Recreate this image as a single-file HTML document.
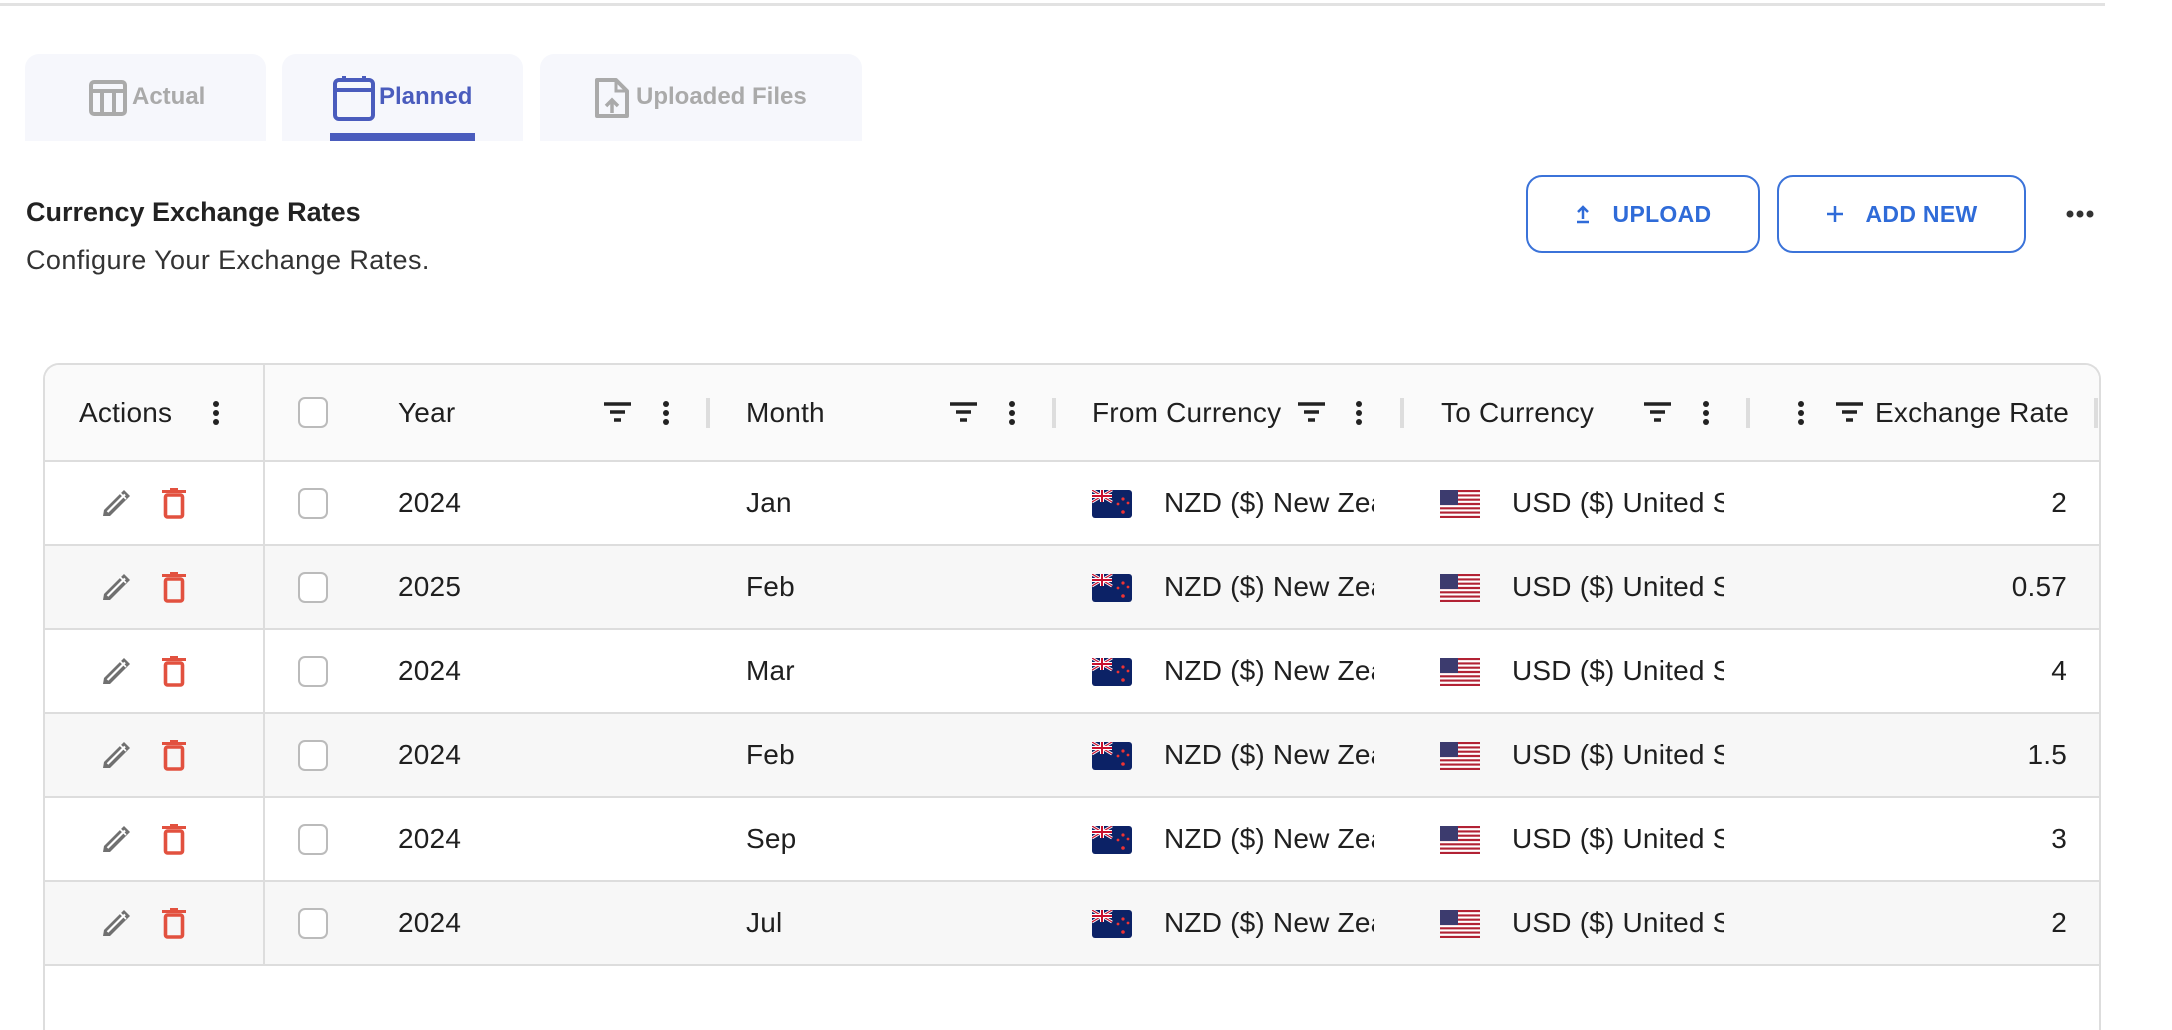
<!DOCTYPE html>
<html><head><meta charset="utf-8"><style>
*{box-sizing:border-box;margin:0;padding:0}
html,body{width:2172px;height:1030px;overflow:hidden}
body{background:#fff;font-family:"Liberation Sans",sans-serif;color:#1f1f1f;position:relative}
.a{position:absolute}
.tab{position:absolute;top:54px;height:87px;background:#f6f7fc;border-radius:14px 14px 0 0}
.tt{position:absolute;font-weight:bold;font-size:24px;top:83px;color:#aaa}
.btn{position:absolute;top:175px;height:78px;border:2px solid #3b73d9;border-radius:16px;color:#2f6bd8;font-weight:bold;font-size:23px;display:flex;align-items:center;justify-content:center;gap:22px;letter-spacing:.3px}
.tbl{position:absolute;left:43px;top:363px;width:2058px;height:667px;border:2px solid #ddd;border-bottom:0;border-radius:16px 16px 0 0;overflow:hidden}
.hd{position:absolute;left:0;top:0;width:100%;height:97px;background:#fafafa;border-bottom:2px solid #ddd}
.row{position:absolute;left:0;width:100%;height:84px;border-bottom:2px solid #ddd}
.t{position:absolute;font-size:28px;line-height:30px;white-space:nowrap;letter-spacing:.2px}
.hd .t{top:33px}
.row .t{top:26px}
.cb{position:absolute;left:253px;width:30px;height:31px;border:2px solid #bbb;border-radius:7px;background:#fff}
.sep{position:absolute;top:33px;width:4px;height:30px;background:#ddd}
.clip{overflow:hidden}
</style></head><body>
<div class="a" style="left:0;top:3px;width:2105px;height:3px;background:#e2e2e2"></div>

<div class="tab" style="left:25px;width:241px"></div>
<div class="tab" style="left:282px;width:241px"></div>
<div class="tab" style="left:540px;width:322px"></div>
<svg class="a" style="left:89px;top:80px" width="38" height="36" viewBox="0 0 38 36"><rect x="2" y="2" width="34" height="32" rx="3" fill="none" stroke="#aaa" stroke-width="4"/><path d="M2 11H36M13 11V34M25 11V34" stroke="#aaa" stroke-width="4"/></svg>
<div class="tt" style="left:132px">Actual</div>
<svg class="a" style="left:333px;top:75px" width="42" height="46" viewBox="0 0 42 46"><rect x="2" y="5" width="38" height="39" rx="4" fill="none" stroke="#4a5cbd" stroke-width="4"/><path d="M2 15H40M11 1V7M31 1V7" stroke="#4a5cbd" stroke-width="4"/></svg>
<div class="tt" style="left:379px;color:#4a5cbd">Planned</div>
<div class="a" style="left:330px;top:133px;width:145px;height:8px;background:#4a5cbd"></div>
<svg class="a" style="left:594px;top:77px" width="36" height="42" viewBox="0 0 36 42"><path d="M3 3H22L33 14V39H3Z" fill="none" stroke="#aaa" stroke-width="4" stroke-linejoin="round"/><path d="M22 3V14H33" fill="none" stroke="#aaa" stroke-width="3"/><path d="M18 36V24M12 29L18 23L24 29" fill="none" stroke="#aaa" stroke-width="3.5"/></svg>
<div class="tt" style="left:636px">Uploaded Files</div>

<div class="a" style="left:26px;top:197px;font-size:27px;font-weight:bold;color:#222">Currency Exchange Rates</div>
<div class="a" style="left:26px;top:245px;font-size:27px;color:#333;letter-spacing:.4px">Configure Your Exchange Rates.</div>

<div class="btn" style="left:1526px;width:234px"><svg width="16" height="20" viewBox="0 0 16 20"><path d="M8 15V3M3 8L8 3L13 8" fill="none" stroke="#2f6bd8" stroke-width="2.5"/><path d="M2 18H14" stroke="#2f6bd8" stroke-width="2.5"/></svg><span>UPLOAD</span></div>
<div class="btn" style="left:1777px;width:249px"><svg width="18" height="18" viewBox="0 0 18 18"><path d="M9 1V17M1 9H17" stroke="#2f6bd8" stroke-width="2.5"/></svg><span>ADD NEW</span></div>
<svg class="a" style="left:2066px;top:209px" width="28" height="10"><circle cx="4" cy="5" r="3.5" fill="#333"/><circle cx="14" cy="5" r="3.5" fill="#333"/><circle cx="24" cy="5" r="3.5" fill="#333"/></svg>

<svg width="0" height="0" style="position:absolute">
<defs>
<g id="flt"><path d="M1 2H28M7 10H22M11 18H18" stroke="#222" stroke-width="3.5"/></g>
<g id="keb"><circle cx="4" cy="3" r="3" fill="#222"/><circle cx="4" cy="12" r="3" fill="#222"/><circle cx="4" cy="21" r="3" fill="#222"/></g>
<g id="pen"><path d="M3 28L4 22L24 2L30 8L10 28Z" fill="#707070"/><path d="M7.5 24L25 6.5" stroke="#fff" stroke-width="2.2"/><path d="M20 5L26 11" stroke="#fff" stroke-width="1.6"/></g>
<g id="trs"><path d="M0 3.5H24M8 1.5H16" stroke="#e2513f" stroke-width="3"/><rect x="3.5" y="7" width="17" height="22" rx="2" fill="none" stroke="#e2513f" stroke-width="3.6"/></g>
<g id="nz"><rect width="40" height="28" rx="3" fill="#0c2266"/><path d="M0 0L20 12M20 0L0 12" stroke="#fff" stroke-width="3"/><path d="M0 0L20 12M20 0L0 12" stroke="#c8102e" stroke-width="1.2"/><path d="M10 0V12M0 6H20" stroke="#fff" stroke-width="4"/><path d="M10 0V12M0 6H20" stroke="#c8102e" stroke-width="2"/><circle cx="31" cy="9" r="1.6" fill="#e33"/><circle cx="26" cy="14" r="1.4" fill="#e33"/><circle cx="36" cy="13" r="1.4" fill="#e33"/><circle cx="31" cy="22" r="1.8" fill="#e33"/></g>
<g id="us"><rect width="40" height="28" rx="3" fill="#fff"/><path d="M0 1.1H40M0 5.4H40M0 9.7H40M0 14H40M0 18.3H40M0 22.6H40M0 26.9H40" stroke="#b22234" stroke-width="2.15"/><rect width="18" height="15" fill="#3c3b6e"/></g>
</defs></svg>

<div class="tbl">
 <div class="hd">
  <div class="t" style="left:34px">Actions</div>
  <svg class="a" style="left:167px;top:36px" width="8" height="25"><use href="#keb"/></svg>
  <div class="a" style="left:218px;top:0;width:2px;height:97px;background:#ddd"></div>
  <div class="cb" style="top:32px"></div>
  <div class="t" style="left:353px">Year</div>
  <svg class="a" style="left:558px;top:37px" width="30" height="22"><use href="#flt"/></svg>
  <svg class="a" style="left:617px;top:36px" width="8" height="25"><use href="#keb"/></svg>
  <div class="sep" style="left:661px"></div>
  <div class="t" style="left:701px">Month</div>
  <svg class="a" style="left:904px;top:37px" width="30" height="22"><use href="#flt"/></svg>
  <svg class="a" style="left:963px;top:36px" width="8" height="25"><use href="#keb"/></svg>
  <div class="sep" style="left:1007px"></div>
  <div class="t" style="left:1047px">From Currency</div>
  <svg class="a" style="left:1252px;top:37px" width="30" height="22"><use href="#flt"/></svg>
  <svg class="a" style="left:1310px;top:36px" width="8" height="25"><use href="#keb"/></svg>
  <div class="sep" style="left:1355px"></div>
  <div class="t" style="left:1396px">To Currency</div>
  <svg class="a" style="left:1598px;top:37px" width="30" height="22"><use href="#flt"/></svg>
  <svg class="a" style="left:1657px;top:36px" width="8" height="25"><use href="#keb"/></svg>
  <div class="sep" style="left:1701px"></div>
  <svg class="a" style="left:1752px;top:36px" width="8" height="25"><use href="#keb"/></svg>
  <svg class="a" style="left:1790px;top:37px" width="30" height="22"><use href="#flt"/></svg>
  <div class="t" style="left:1830px">Exchange Rate</div>
  <div class="sep" style="left:2049px"></div>
 </div>
 <div class="a" style="left:218px;top:97px;width:2px;height:504px;background:#ddd;z-index:2"></div>

 <div class="row" style="top:97px;background:#fff">
  <svg class="a" style="left:55px;top:26px" width="32" height="31"><use href="#pen"/></svg><svg class="a" style="left:117px;top:26px" width="24" height="31"><use href="#trs"/></svg>
  <div class="cb" style="top:26px"></div><div class="t" style="left:353px">2024</div><div class="t" style="left:701px">Jan</div>
  <svg class="a" style="left:1047px;top:28px" width="40" height="28"><use href="#nz"/></svg><div class="t clip" style="left:1119px;width:210px">NZD ($) New Zealand Dollar</div>
  <svg class="a" style="left:1395px;top:28px" width="40" height="28"><use href="#us"/></svg><div class="t clip" style="left:1467px;width:212px">USD ($) United States Dollar</div>
  <div class="t" style="right:32px">2</div>
 </div>
 <div class="row" style="top:181px;background:#f7f7f7">
  <svg class="a" style="left:55px;top:26px" width="32" height="31"><use href="#pen"/></svg><svg class="a" style="left:117px;top:26px" width="24" height="31"><use href="#trs"/></svg>
  <div class="cb" style="top:26px"></div><div class="t" style="left:353px">2025</div><div class="t" style="left:701px">Feb</div>
  <svg class="a" style="left:1047px;top:28px" width="40" height="28"><use href="#nz"/></svg><div class="t clip" style="left:1119px;width:210px">NZD ($) New Zealand Dollar</div>
  <svg class="a" style="left:1395px;top:28px" width="40" height="28"><use href="#us"/></svg><div class="t clip" style="left:1467px;width:212px">USD ($) United States Dollar</div>
  <div class="t" style="right:32px">0.57</div>
 </div>
 <div class="row" style="top:265px;background:#fff">
  <svg class="a" style="left:55px;top:26px" width="32" height="31"><use href="#pen"/></svg><svg class="a" style="left:117px;top:26px" width="24" height="31"><use href="#trs"/></svg>
  <div class="cb" style="top:26px"></div><div class="t" style="left:353px">2024</div><div class="t" style="left:701px">Mar</div>
  <svg class="a" style="left:1047px;top:28px" width="40" height="28"><use href="#nz"/></svg><div class="t clip" style="left:1119px;width:210px">NZD ($) New Zealand Dollar</div>
  <svg class="a" style="left:1395px;top:28px" width="40" height="28"><use href="#us"/></svg><div class="t clip" style="left:1467px;width:212px">USD ($) United States Dollar</div>
  <div class="t" style="right:32px">4</div>
 </div>
 <div class="row" style="top:349px;background:#f7f7f7">
  <svg class="a" style="left:55px;top:26px" width="32" height="31"><use href="#pen"/></svg><svg class="a" style="left:117px;top:26px" width="24" height="31"><use href="#trs"/></svg>
  <div class="cb" style="top:26px"></div><div class="t" style="left:353px">2024</div><div class="t" style="left:701px">Feb</div>
  <svg class="a" style="left:1047px;top:28px" width="40" height="28"><use href="#nz"/></svg><div class="t clip" style="left:1119px;width:210px">NZD ($) New Zealand Dollar</div>
  <svg class="a" style="left:1395px;top:28px" width="40" height="28"><use href="#us"/></svg><div class="t clip" style="left:1467px;width:212px">USD ($) United States Dollar</div>
  <div class="t" style="right:32px">1.5</div>
 </div>
 <div class="row" style="top:433px;background:#fff">
  <svg class="a" style="left:55px;top:26px" width="32" height="31"><use href="#pen"/></svg><svg class="a" style="left:117px;top:26px" width="24" height="31"><use href="#trs"/></svg>
  <div class="cb" style="top:26px"></div><div class="t" style="left:353px">2024</div><div class="t" style="left:701px">Sep</div>
  <svg class="a" style="left:1047px;top:28px" width="40" height="28"><use href="#nz"/></svg><div class="t clip" style="left:1119px;width:210px">NZD ($) New Zealand Dollar</div>
  <svg class="a" style="left:1395px;top:28px" width="40" height="28"><use href="#us"/></svg><div class="t clip" style="left:1467px;width:212px">USD ($) United States Dollar</div>
  <div class="t" style="right:32px">3</div>
 </div>
 <div class="row" style="top:517px;background:#f7f7f7">
  <svg class="a" style="left:55px;top:26px" width="32" height="31"><use href="#pen"/></svg><svg class="a" style="left:117px;top:26px" width="24" height="31"><use href="#trs"/></svg>
  <div class="cb" style="top:26px"></div><div class="t" style="left:353px">2024</div><div class="t" style="left:701px">Jul</div>
  <svg class="a" style="left:1047px;top:28px" width="40" height="28"><use href="#nz"/></svg><div class="t clip" style="left:1119px;width:210px">NZD ($) New Zealand Dollar</div>
  <svg class="a" style="left:1395px;top:28px" width="40" height="28"><use href="#us"/></svg><div class="t clip" style="left:1467px;width:212px">USD ($) United States Dollar</div>
  <div class="t" style="right:32px">2</div>
 </div>
</div>
</body></html>
